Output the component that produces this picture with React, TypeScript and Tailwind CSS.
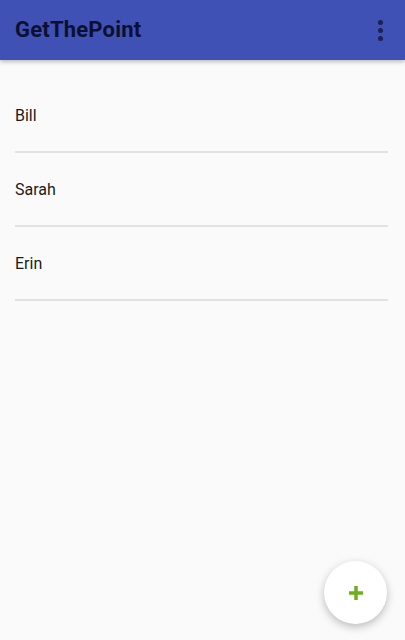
const people = ["Bill", "Sarah", "Erin"];

const App = () => {
  return (
    <div className="relative w-[405px] h-[640px] bg-[#fafafa] overflow-hidden" style={{ fontFamily: "Roboto, 'Liberation Sans', sans-serif" }}>
      <header className="h-[60px] bg-[#3f51b5] flex items-center justify-between pl-[15px] pr-[22px] shadow-[0_2px_4px_rgba(0,0,0,0.25)] relative z-10">
        <h1 className="text-[22px] font-bold text-[#0c1030] tracking-[0.2px] pb-[1px]">GetThePoint</h1>
        <div className="flex flex-col gap-[3px] items-center">
          <span className="w-[5px] h-[5px] rounded-full bg-[#1b2150]" />
          <span className="w-[5px] h-[5px] rounded-full bg-[#1b2150]" />
          <span className="w-[5px] h-[5px] rounded-full bg-[#1b2150]" />
        </div>
      </header>

      <ul className="pt-[19px] pl-[15px] pr-[17px]">
        {people.map((name) => (
          <li key={name} className="h-[74px] flex items-center pt-[2px] border-b-2 border-[#e2e2e2] text-[16px] text-[#1a1a1a]">
            {name}
          </li>
        ))}
      </ul>

      <button className="absolute left-[324px] top-[561px] w-[63px] h-[63px] rounded-full bg-white shadow-[0_3px_8px_rgba(0,0,0,0.25)] flex items-center justify-center">
        <svg width="16" height="16" viewBox="0 0 16 16">
          <path d="M8 1v14M1 8h14" stroke="#6fae1c" strokeWidth="3.5" />
        </svg>
      </button>
    </div>
  );
};

export default App;
